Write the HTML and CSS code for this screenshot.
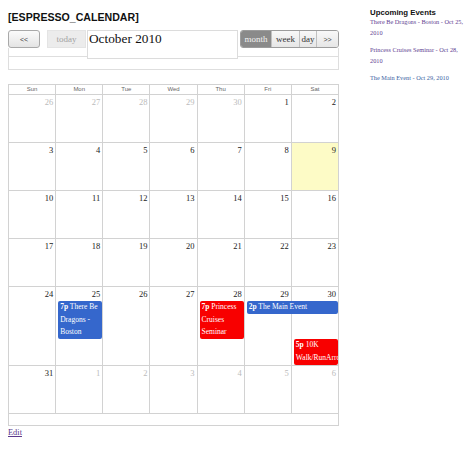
FILE: index.html
```html
<!DOCTYPE html>
<html>
<head>
<meta charset="utf-8">
<link rel="stylesheet" href="styles.css">
</head>
<body>
<div class="page">
  <div class="main">
    <h1 class="title">[ESPRESSO_CALENDAR]</h1>
    <div class="toolbar">
      <div class="tb-left">
        <span class="btn btn-prev">&lt;&lt;</span>
        <span class="btn btn-today">today</span>
      </div>
      <div class="tb-title">October 2010</div>
      <div class="tb-right">
        <span class="seg seg-active">month</span>
        <span class="seg">week</span>
        <span class="seg">day</span>
        <span class="seg seg-next">&gt;&gt;</span>
      </div>
      <div class="tb-band1"></div>
      <div class="tb-band2"></div>
    </div>

    <div class="cal">
      <div class="cal-head">
        <div class="hd">Sun</div><div class="hd">Mon</div><div class="hd">Tue</div><div class="hd">Wed</div><div class="hd">Thu</div><div class="hd">Fri</div><div class="hd">Sat</div>
      </div>
      <div class="week">
        <div class="day other"><span class="num">26</span></div>
        <div class="day other"><span class="num">27</span></div>
        <div class="day other"><span class="num">28</span></div>
        <div class="day other"><span class="num">29</span></div>
        <div class="day other"><span class="num">30</span></div>
        <div class="day"><span class="num">1</span></div>
        <div class="day"><span class="num">2</span></div>
      </div>
      <div class="week">
        <div class="day"><span class="num">3</span></div>
        <div class="day"><span class="num">4</span></div>
        <div class="day"><span class="num">5</span></div>
        <div class="day"><span class="num">6</span></div>
        <div class="day"><span class="num">7</span></div>
        <div class="day"><span class="num">8</span></div>
        <div class="day today"><span class="num">9</span></div>
      </div>
      <div class="week">
        <div class="day"><span class="num">10</span></div>
        <div class="day"><span class="num">11</span></div>
        <div class="day"><span class="num">12</span></div>
        <div class="day"><span class="num">13</span></div>
        <div class="day"><span class="num">14</span></div>
        <div class="day"><span class="num">15</span></div>
        <div class="day"><span class="num">16</span></div>
      </div>
      <div class="week">
        <div class="day"><span class="num">17</span></div>
        <div class="day"><span class="num">18</span></div>
        <div class="day"><span class="num">19</span></div>
        <div class="day"><span class="num">20</span></div>
        <div class="day"><span class="num">21</span></div>
        <div class="day"><span class="num">22</span></div>
        <div class="day"><span class="num">23</span></div>
      </div>
      <div class="week week-events">
        <div class="day c1"><span class="num">24</span></div>
        <div class="day c2"><span class="num">25</span></div>
        <div class="day c3"><span class="num">26</span></div>
        <div class="day c4"><span class="num">27</span></div>
        <div class="day c5"><span class="num">28</span></div>
        <div class="day c6"><span class="num">29</span></div>
        <div class="day c7"><span class="num">30</span></div>
        <div class="ev blue ev-dragons"><b>7p</b> There Be Dragons - Boston</div>
        <div class="ev red ev-princess"><b>7p</b> Princess Cruises Seminar</div>
        <div class="ev blue ev-main"><b>2p</b> The Main Event</div>
        <div class="ev red ev-10k"><b>5p</b> 10K Walk/RunArround</div>
      </div>
      <div class="week">
        <div class="day"><span class="num">31</span></div>
        <div class="day other"><span class="num">1</span></div>
        <div class="day other"><span class="num">2</span></div>
        <div class="day other"><span class="num">3</span></div>
        <div class="day other"><span class="num">4</span></div>
        <div class="day other"><span class="num">5</span></div>
        <div class="day other"><span class="num">6</span></div>
      </div>
      <div class="cal-foot"></div>
    </div>
    <a class="edit" href="#">Edit</a>
  </div>

  <aside class="side">
    <h3 class="side-title">Upcoming Events</h3>
    <p class="side-item"><a class="visited" href="#">There Be Dragons - Boston - Oct 25, 2010</a></p>
    <p class="side-item"><a class="visited" href="#">Princess Cruises Seminar - Oct 28, 2010</a></p>
    <p class="side-item"><a class="link" href="#">The Main Event - Oct 29, 2010</a></p>
  </aside>
</div>
</body>
</html>
```

FILE: styles.css
```css
html, body {
  margin: 0;
  padding: 0;
  background: #fff;
}

.page {
  display: flex;
  align-items: flex-start;
  padding: 0 8px;
  gap: 31px;
  font-family: "Liberation Serif", "Times New Roman", serif;
  color: #222;
}

.main {
  width: 331px;
  flex: none;
}

.title {
  font-family: "Liberation Sans", Arial, sans-serif;
  font-size: 10.6px;
  font-weight: bold;
  line-height: 12px;
  margin: 11px 0 7px 0;
  color: #111;
}

/* toolbar */
.toolbar {
  display: grid;
  grid-template-columns: 79px 151px 101px;
  grid-template-rows: 18px 9px 13px;
}

.tb-left {
  grid-row: 1;
  grid-column: 1;
  display: flex;
  gap: 7px;
  align-items: stretch;
}

.btn {
  display: flex;
  align-items: center;
  justify-content: center;
  box-sizing: border-box;
  height: 18px;
}

.btn-prev {
  width: 32px;
  border: 1px solid #a9a9a9;
  border-radius: 3px;
  background: linear-gradient(#fbfbfb, #e4e4e4);
  font-family: "Liberation Sans", Arial, sans-serif;
  font-size: 7px;
  color: #444;
}

.btn-today {
  width: 39px;
  background: #ececec;
  border: 1px solid #e4e4e4;
  color: #a3a3a3;
  font-size: 9px;
}

.tb-title {
  grid-row: 1 / 3;
  grid-column: 2;
  height: 29px;
  box-sizing: border-box;
  border: 1px solid #dcdcdc;
  background: #fff;
  font-size: 13.3px;
  line-height: 16px;
  padding: 0 0 0 1px;
  color: #111;
  z-index: 2;
  position: relative;
}

.tb-right {
  grid-row: 1;
  grid-column: 3;
  justify-self: end;
  display: flex;
  height: 18px;
  box-sizing: border-box;
  border: 1px solid #9c9c9c;
  border-radius: 3px;
  overflow: hidden;
  font-size: 9px;
}

.seg {
  display: flex;
  align-items: center;
  justify-content: center;
  background: linear-gradient(#f8f8f8, #e6e6e6);
  border-left: 1px solid #c0c0c0;
  color: #333;
}

.seg:nth-child(1) { width: 30px; border-left: none; }
.seg:nth-child(2) { width: 27px; }
.seg:nth-child(3) { width: 16px; }
.seg:nth-child(4) { width: 21px; }

.seg-active {
  background: #8a8a8a;
  color: #f2f2f2;
}

.seg-next {
  font-family: "Liberation Sans", Arial, sans-serif;
  font-size: 7px;
  color: #444;
}

.tb-band1 {
  grid-row: 2;
  grid-column: 1 / -1;
  border: 1px solid #dedede;
  border-top: none;
}

.tb-band2 {
  grid-row: 3;
  grid-column: 1 / -1;
  border: 1px solid #dedede;
  border-top: none;
}

/* calendar */
.cal {
  margin-top: 14px;
  border-top: 1px solid #d2d2d2;
  border-left: 1px solid #d2d2d2;
}

.cal-head,
.week {
  display: grid;
  grid-template-columns: repeat(7, 1fr);
}

.hd {
  height: 9px;
  border-right: 1px solid #d2d2d2;
  border-bottom: 1px solid #d2d2d2;
  font-family: "Liberation Sans", Arial, sans-serif;
  font-size: 6px;
  line-height: 9px;
  text-align: center;
  color: #666;
}

.week {
  height: 48px;
}

.day {
  border-right: 1px solid #d2d2d2;
  border-bottom: 1px solid #d2d2d2;
  text-align: right;
  padding: 3px 2px 0 0;
  font-size: 8.5px;
  line-height: 9px;
  color: #222;
  min-width: 0;
}

.day.other { color: #bbb; }
.day.today { background: #fdfbc6; }

.week-events {
  height: 79px;
  grid-template-rows: 14px 13px 25px 26px 1fr;
}

.week-events .day { grid-row: 1 / -1; }
.c1 { grid-column: 1; }
.c2 { grid-column: 2; }
.c3 { grid-column: 3; }
.c4 { grid-column: 4; }
.c5 { grid-column: 5; }
.c6 { grid-column: 6; }
.c7 { grid-column: 7; }

.ev {
  margin: 0 1px 0 2px;
  padding: 0 1px 0 2px;
  border-radius: 2px;
  color: #fff;
  font-size: 7.5px;
  line-height: 12.5px;
  overflow: hidden;
  z-index: 1;
  min-width: 0;
}

.ev b { font-weight: bold; }

.blue { background: #3567cc; }
.red { background: #f80000; }

.ev-dragons { grid-row: 2 / 4; grid-column: 2; }
.ev-princess { grid-row: 2 / 4; grid-column: 5; }
.ev-main { grid-row: 2; grid-column: 6 / 8; }
.ev-10k { grid-row: 4; grid-column: 7; }

.cal-foot {
  height: 11px;
  border-right: 1px solid #d2d2d2;
  border-bottom: 1px solid #d2d2d2;
}

.edit {
  display: block;
  width: fit-content;
  margin-top: 2px;
  font-size: 8.4px;
  line-height: 10px;
  color: #5b3a8c;
  text-decoration: underline;
}

/* sidebar */
.side {
  width: 98px;
  flex: none;
}

.side-title {
  font-family: "Liberation Sans", Arial, sans-serif;
  font-size: 7.8px;
  font-weight: bold;
  line-height: 9px;
  margin: 8px 0 0 0;
  color: #111;
}

.side-item {
  margin: 0 0 7px 0;
  font-size: 6.3px;
  line-height: 10.5px;
}

.side-item a { text-decoration: none; }
.visited { color: #5f4292; }
.link { color: #3b5f9f; }
```
